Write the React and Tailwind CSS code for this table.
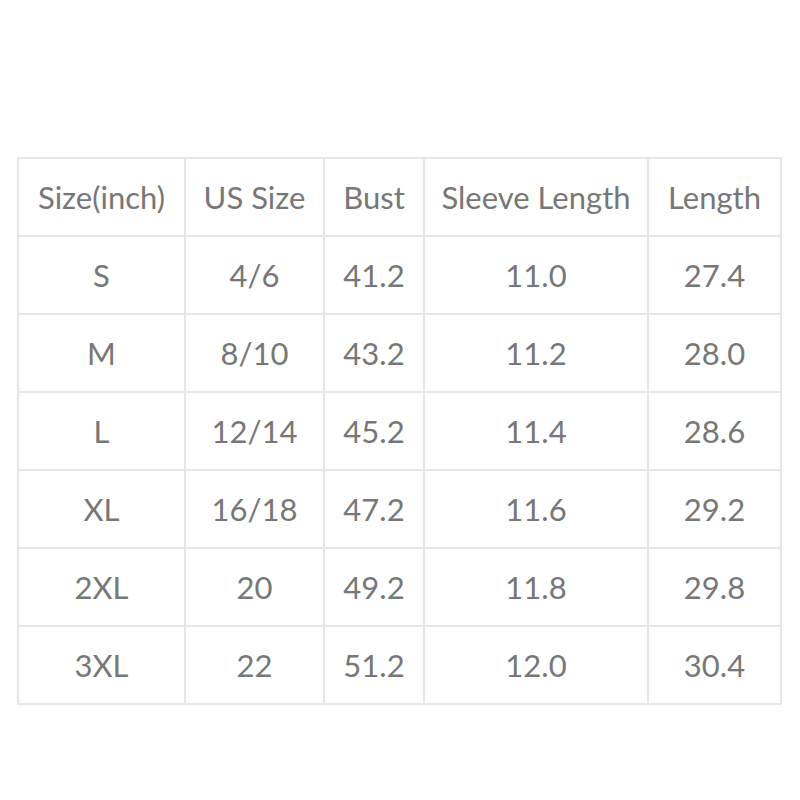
import React from 'react';

const header = ['Size(inch)', 'US Size', 'Bust', 'Sleeve Length', 'Length'];
const rows = [
  ['S', '4/6', '41.2', '11.0', '27.4'],
  ['M', '8/10', '43.2', '11.2', '28.0'],
  ['L', '12/14', '45.2', '11.4', '28.6'],
  ['XL', '16/18', '47.2', '11.6', '29.2'],
  ['2XL', '20', '49.2', '11.8', '29.8'],
  ['3XL', '22', '51.2', '12.0', '30.4'],
];
const widths = ['w-[167px]', 'w-[139px]', 'w-[100px]', 'w-[224px]', 'w-[133px]'];

export default function App() {
  return (
    <div className="w-[800px] h-[800px] bg-white pt-[157px] pl-[17px] font-['Lato',sans-serif] text-[#777777]">
      <table className="border-collapse table-fixed w-[765px] text-[31px] leading-none">
        <tbody>
          {[header, ...rows].map((r, i) => (
            <tr key={i} className="h-[78px]">
              {r.map((c, j) => (
                <td key={j} className={`${widths[j]} border-2 border-[#e6e6e6] text-center align-middle p-0`}>{c}</td>
              ))}
            </tr>
          ))}
        </tbody>
      </table>
    </div>
  );
}
